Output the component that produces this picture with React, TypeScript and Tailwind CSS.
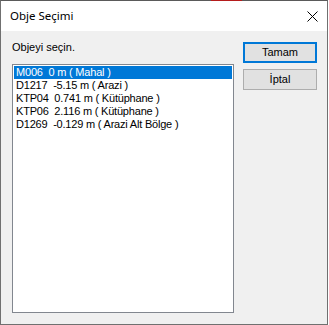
const rows = [
  "M006  0 m ( Mahal )",
  "D1217  -5.15 m ( Arazi )",
  "KTP04  0.741 m ( Kütüphane )",
  "KTP06  2.116 m ( Kütüphane )",
  "D1269  -0.129 m ( Arazi Alt Bölge )",
];

function DialogButton({ label, isDefault }: { label: string; isDefault?: boolean }) {
  return (
    <button
      className={`flex h-[21px] w-[74px] items-center justify-center bg-[#e1e1e1] text-[11px] leading-none text-black ${
        isDefault ? "border-2 border-[#0078d7]" : "border border-[#adadad]"
      }`}
    >
      {label}
    </button>
  );
}

export default function App() {
  return (
    <div className="flex h-[325px] w-[329px] bg-white font-['Liberation_Sans',Arial,sans-serif]">
      <div className="relative flex h-[325px] w-[328px] flex-col border-x border-b border-[#707070] border-t border-t-[#5a5a5a]">
        {/* red strip from the window behind */}
        <div className="absolute -top-px left-[210px] h-px w-[31px] bg-[#b51c1c]" />

        {/* title bar */}
        <div className="flex h-[30px] items-center justify-between bg-white pl-[9px] pr-[9px]">
          <span className="font-['Noto_Sans',sans-serif] text-[11.5px] text-black">Obje Seçimi</span>
          <svg width="11" height="11" viewBox="0 0 11 11" className="mt-px">
            <path d="M0.5 0.5 L10.5 10.5 M10.5 0.5 L0.5 10.5" stroke="black" strokeWidth="1" fill="none" />
          </svg>
        </div>

        {/* body */}
        <div className="flex flex-1 bg-[#f0f0f0] pl-[11px] pt-[10px]">
          <div className="flex w-[222px] flex-col">
            <div className="h-[13px] text-[11px] leading-[13px] text-black">Objeyi seçin.</div>
            <div className="mt-[10px] h-[249px] border border-[#82878f] bg-white p-px">
              {rows.map((row, index) => (
                <div
                  key={row}
                  className={`h-[13px] whitespace-pre pl-[2px] text-[11px] leading-[13px] tracking-[-0.2px] ${
                    index === 0 ? "bg-[#0078d7] text-white" : "text-black"
                  }`}
                >
                  {row}
                </div>
              ))}
            </div>
          </div>

          <div className="ml-[9px] flex flex-col gap-[6px] pt-px">
            <DialogButton label="Tamam" isDefault />
            <DialogButton label="İptal" />
          </div>
        </div>
      </div>
    </div>
  );
}
